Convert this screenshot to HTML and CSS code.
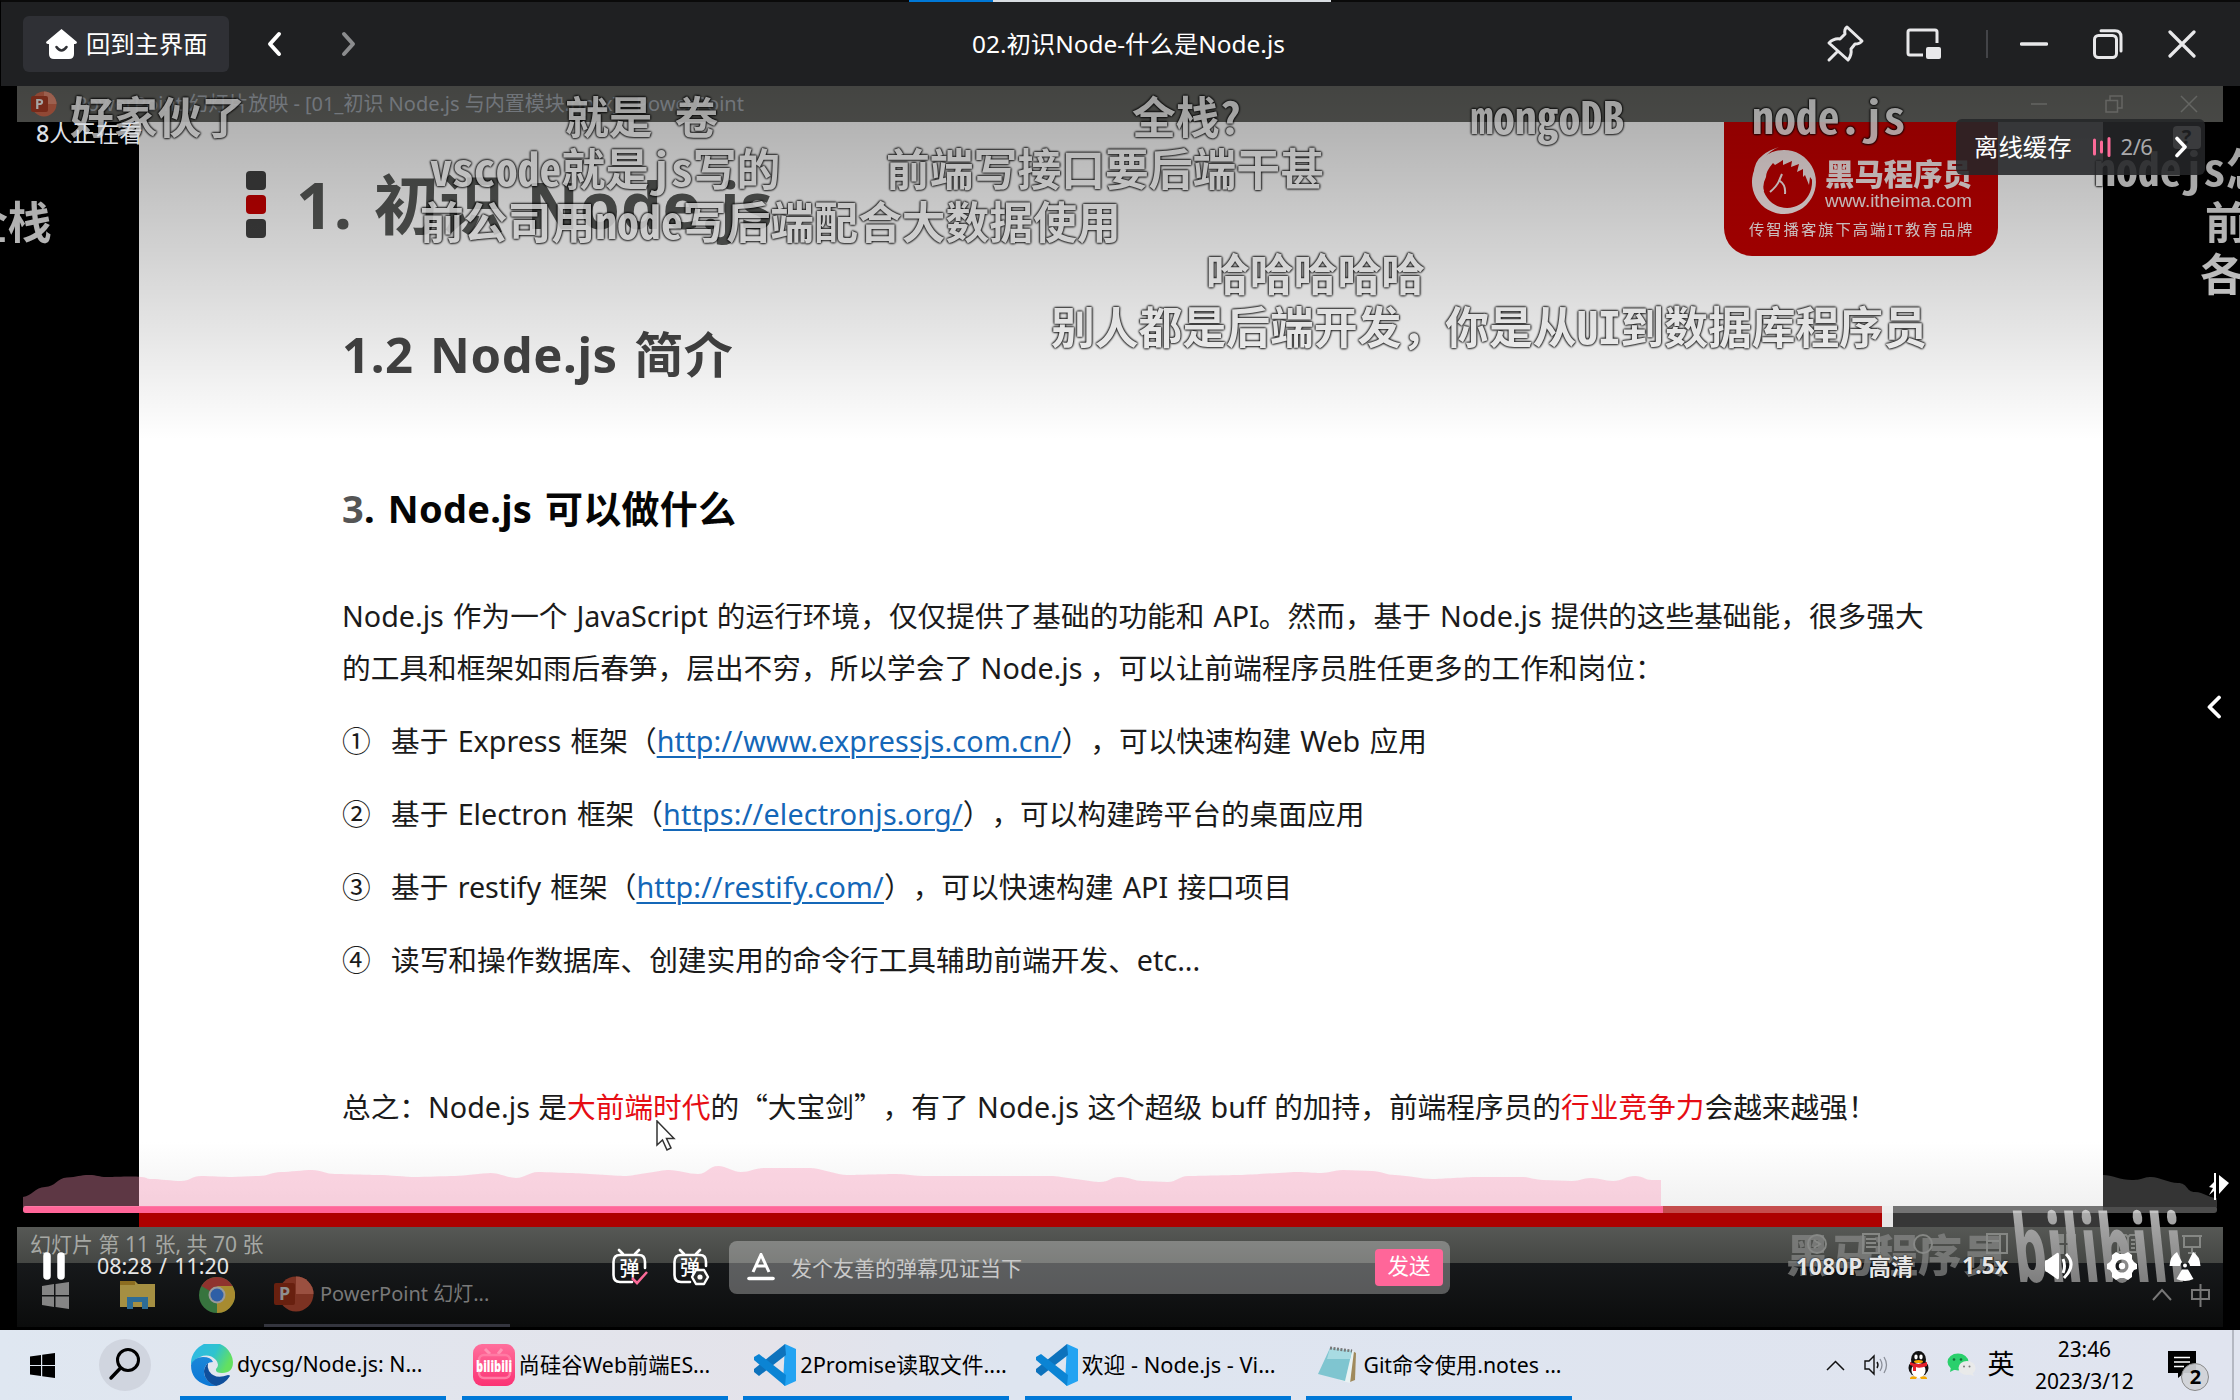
FILE: index.html
```html
<!DOCTYPE html>
<html lang="zh-CN">
<head>
<meta charset="utf-8">
<title>02.初识Node-什么是Node.js</title>
<link rel="stylesheet" href="styles.css">
</head>
<body>
<div class="screen">
  <header class="titlebar">
    <div class="loading-strip"></div>
    <button class="home">
      <svg width="33" height="32" viewBox="0 0 33 32"><path d="M16.500 1 L32 14 Q32 16 30 16 H29 V26 Q29 31 24 31 H9 Q4 31 4 26 V16 H3 Q1 16 1 14 Z" fill="#fff"/><path d="M11.500 19 Q16.500 26 21.500 19" fill="none" stroke="#2f3035" stroke-width="2.600" stroke-linecap="round"/></svg>
      <span>回到主界面</span>
    </button>
    <svg class="nav-back" width="16" height="26" viewBox="0 0 16 26"><path d="M13 3 L4 13 L13 23" fill="none" stroke="#fff" stroke-width="4" stroke-linecap="round" stroke-linejoin="round"/></svg>
    <svg class="nav-next" width="16" height="26" viewBox="0 0 16 26"><path d="M3 3 L12 13 L3 23" fill="none" stroke="#8b8c8e" stroke-width="4" stroke-linecap="round" stroke-linejoin="round"/></svg>
    <h1 class="window-title">02.初识Node-什么是Node.js</h1>
    <div class="window-tools">
      <svg width="38" height="38" viewBox="0 0 38 38"><path d="M21 2 L36 16 Q34 19 29 19 L25 24 Q26 30 22 35 L3 18 Q8 13 14 14 L19 9 Q18 4 21 2 Z M12 26 L3 35" fill="none" stroke="#e8e8ea" stroke-width="3" stroke-linejoin="round" stroke-linecap="round"/></svg>
      <svg width="36" height="32" viewBox="0 0 36 32"><path d="M31 15 V4 Q31 2 29 2 H4 Q2 2 2 4 V25 Q2 27 4 27 H17" fill="none" stroke="#e8e8ea" stroke-width="3"/><rect x="20" y="19" width="15" height="12" rx="2" fill="#e8e8ea"/></svg>
      <i class="divider"></i>
      <svg width="28" height="4" viewBox="0 0 28 4"><path d="M1.500 2 H26.500" stroke="#e8e8ea" stroke-width="3.400" stroke-linecap="round"/></svg>
      <svg width="30" height="31" viewBox="0 0 30 31"><rect x="1.500" y="6.500" width="22" height="22" rx="4" fill="none" stroke="#e8e8ea" stroke-width="3"/><path d="M8 1.800 H22 Q28 1.800 28 8 V22" fill="none" stroke="#e8e8ea" stroke-width="3" stroke-linecap="round"/></svg>
      <svg width="28" height="28" viewBox="0 0 28 28"><path d="M2 2 L26 26 M26 2 L2 26" stroke="#e8e8ea" stroke-width="3.200" stroke-linecap="round"/></svg>
    </div>
  </header>

  <main class="video">
    <div class="ppt-title">
      <svg width="26" height="28" viewBox="0 0 26 28"><circle cx="13" cy="14" r="12.500" fill="#d8694b"/><path d="M13 1.500 A12.500 12.500 0 0 1 25.500 14 H13 Z" fill="#ee9075"/><rect x="0" y="6" width="17" height="16" rx="2" fill="#b23a20"/><text x="4" y="19" class="p-letter">P</text></svg>
      <span>PowerPoint 幻灯片放映 - [01_初识 Node.js 与内置模块.pptx] - PowerPoint</span>
      <div class="ppt-window">
        <svg width="18" height="18"><path d="M1 9 H17" stroke="#92938f" stroke-width="1.500"/></svg>
        <svg width="18" height="18"><path d="M1 5.500 H12.500 V17 H1 Z M5 5 V1 H17 V13 H13" fill="none" stroke="#92938f" stroke-width="1.500"/></svg>
        <svg width="18" height="18"><path d="M1 1 L17 17 M17 1 L1 17" stroke="#92938f" stroke-width="1.500"/></svg>
      </div>
    </div>

    <article class="slide">
      <div class="slide-heading">
        <div class="marks"><i></i><i></i><i></i></div>
        <h2>1. 初识 Node.js</h2>
      </div>
      <h3>1.2 Node.js 简介</h3>
      <h4><span class="dim">3</span>. Node.js 可以做什么</h4>
      <p class="intro"><span class="l1">Node.js 作为一个 JavaScript 的运行环境，仅仅提供了基础的功能和 API。然而，基于 Node.js 提供的这些基础能，很多强大</span><br><span class="l2">的工具和框架如雨后春笋，层出不穷，所以学会了 Node.js ，可以让前端程序员胜任更多的工作和岗位：</span></p>
      <ol>
        <li><b>①</b>基于 Express 框架（<a>http://www.expressjs.com.cn/</a>），可以快速构建 Web 应用</li>
        <li><b>②</b>基于 Electron 框架（<a>https://electronjs.org/</a>），可以构建跨平台的桌面应用</li>
        <li><b>③</b>基于 restify 框架（<a>http://restify.com/</a>），可以快速构建 API 接口项目</li>
        <li><b>④</b>读写和操作数据库、创建实用的命令行工具辅助前端开发、etc...</li>
      </ol>
      <p class="summary">总之：Node.js 是<em>大前端时代</em>的<q>“</q>大宝剑<q>”</q>，有了 Node.js 这个超级 buff 的加持，前端程序员的<em>行业竞争力</em>会越来越强！</p>
      <div class="brand">
        <svg width="70" height="70" viewBox="0 0 70 70"><path fill-rule="evenodd" fill="#fff" d="M35 3 A32 32 0 1 1 34.900 3 Z M38 9 A25 26 0 1 0 38.100 9 Z"/><path d="M10 47 Q-2 20 14 8 Q20 3 30 0 Q20 4 15 12 Q4 26 12 47 Z" fill="#fff"/><path d="M12 46 Q8 26 22 12 Q38 2 56 12 Q66 22 64 34 L61 30 L60 38 L56 28 L54 30 L54 22 L48 25 L50 17 L42 20 L43 14 L34 18 L34 13 L26 18 L24 16 Q17 24 17 30 Q13 38 15 44 Z" fill="#fff"/><path d="M21 45 Q28 39 30 34 L33 27 M31 34 Q37 38 36 47" fill="none" stroke="#fff" stroke-width="2"/></svg>
        <div class="brand-name"><strong>黑马程序员</strong><span>www.itheima.com</span></div>
        <small>传智播客旗下高端IT教育品牌</small>
      </div>
    </article>
    <div class="slide-foot"><i class="red"></i><i class="white"></i><i class="grey"></i></div>

    <div class="ppt-status">
      <span>幻灯片 第 11 张, 共 70 张</span>
      <div class="ppt-views">
        <svg width="220" height="24" viewBox="0 0 220 24" fill="none" stroke="#858784" stroke-width="2"><circle cx="12" cy="12" r="9"/><path d="M9 8 L15 12 L9 16"/><path d="M58 2 H74 V21 H58 Z M61 7 H71 M61 11 H71 M61 15 H71"/><circle cx="118" cy="12" r="9"/><path d="M182 2 H202 V21 H182 Z M182 9 H195 M195 2 V21"/></svg>
        <svg width="154" height="26" viewBox="0 0 154 26" fill="none" stroke="#858784" stroke-width="2"><path d="M3 3 H11 V10 H3 Z M15 3 H23 V10 H15 Z M3 14 H11 V21 H3 Z M15 14 H23 V21 H15 Z" fill="#858784"/><path d="M66 3 H74 L76 5 L78 3 H85 V20 H66 Z M76 5 V20 M69 8 H73 M79 8 H83 M69 12 H73 M79 12 H83 M69 16 H73 M79 16 H83 M130 4 H150 M132 4 V15 H148 V4 M140 15 V20 M136 21 H144"/></svg>
      </div>
    </div>
    <div class="ppt-taskbar">
      <svg class="win" width="27" height="27" viewBox="0 0 27 27"><path d="M0 4 L12 2 V13 H0 Z M13.500 2 L27 0 V13 H13.500 Z M0 14.500 H12 V25 L0 23 Z M13.500 14.500 H27 V27 L13.500 25 Z" fill="#858585"/></svg>
      <svg class="folder" width="36" height="30" viewBox="0 0 36 30"><path d="M0 1 H15 L18 4 H35 V27 H0 Z" fill="#a58f42"/><path d="M0 1 H15 V5 H0Z" fill="#8c6d20"/><path d="M7 29 V17 H28 V29 H22 V22 H13 V29 Z" fill="#2d6c96"/></svg>
      <svg class="chrome" width="36" height="36" viewBox="0 0 36 36"><circle cx="18" cy="18" r="18" fill="#37743e"/><path d="M18 18 L2.400 9 A18 18 0 0 1 33.600 9 Z" fill="#8f332e"/><path d="M18 18 L33.600 9 A18 18 0 0 1 18 36 Z" fill="#a78b30"/><path d="M18 9 H33.600 L26 20 Z" fill="#a78b30"/><circle cx="18" cy="18" r="8.500" fill="#9a9a9a"/><circle cx="18" cy="18" r="6.500" fill="#2f5fa6"/></svg>
      <div class="ppt-app">
        <svg width="40" height="36" viewBox="0 0 40 36"><circle cx="22" cy="18" r="17.500" fill="#7c3222"/><path d="M22 .5 A17.500 17.500 0 0 1 39.500 18 H22 Z" fill="#9a5040"/><rect y="7" width="21" height="22" rx="2" fill="#68200f"/><text x="5" y="24" class="p-small">P</text></svg>
        <span>PowerPoint 幻灯...</span>
      </div>
      <svg class="mini-tray" width="62" height="26" viewBox="0 0 62 26" fill="none" stroke="#777" stroke-width="2"><path d="M2 18 L11 8 L20 18 M41 8 H58 V17 H41 Z M49.500 2 V25"/></svg>
    </div>

    <div class="wm-heima">黑马程序员</div>
    <div class="wm-bili">bilibili</div>
    <svg class="cursor" width="20" height="32" viewBox="0 0 20 32"><path d="M1 1 V25 L6.500 20 L11 30 L15 28 L10.500 18.500 H18 Z" fill="#fff" stroke="#333" stroke-width="1.500"/></svg>

    <div class="danmaku">
      <span class="d1">好家伙了</span><span class="d2">就是 卷</span><span class="d3">全栈?</span><span class="d4">mongoDB</span><span class="d5">node.js</span>
      <span class="d6">vscode就是js写的</span><span class="d7">前端写接口要后端干甚</span><span class="d8">nodejs怎么</span>
      <span class="d9">全栈</span><span class="d10">前公司用node写后端配合大数据使用</span><span class="d11">前端</span>
      <span class="d12">哈哈哈哈哈</span><span class="d13">各位</span>
      <span class="d14">别人都是后端开发<u>，</u>你是从UI到数据库程序员</span>
    </div>
    <div class="shade"></div>
    <div class="viewers"><b>8</b>人正在看</div>

    <div class="cache">
      <span>离线缓存</span>
      <svg width="18" height="20" viewBox="0 0 18 20"><path d="M1.500 3 V17 M8.500 5 V15 M16 1.500 V18.500" stroke="#fb6a98" stroke-width="3" stroke-linecap="round"/></svg>
      <em>2/6</em>
      <div class="help">?</div>
      <svg class="go" width="14" height="22" viewBox="0 0 14 22"><path d="M3 2.500 L11 11 L3 19.500" fill="none" stroke="#fff" stroke-width="3.600" stroke-linecap="round" stroke-linejoin="round"/></svg>
    </div>
    <svg class="expand" width="16" height="24" viewBox="0 0 16 24"><path d="M13 2.500 L3.500 12 L13 21.500" fill="none" stroke="#fff" stroke-width="3.800" stroke-linecap="round" stroke-linejoin="round"/></svg>

    <section class="player">
      <svg class="heat" width="2238" height="50" viewBox="0 1160 2238 50">
        <path fill="rgb(251,150,185)" fill-opacity=".37" d="M23 1207 V1197 C32 1196 35 1187 45 1187 S57 1178 67 1177.500 S80 1175 89 1175 S98 1177 107 1177 S132 1176 141 1177 S145 1179 152 1179 S172 1181 181 1181 S192 1176 201 1176 S223 1177 232 1177 S250 1176 259 1176 S272 1172 281 1172 S303 1170 312 1170 S326 1174 335 1174 S370 1175 379 1175 S406 1177 415 1177 S446 1176 455 1176 S482 1173 491 1173 S507 1178 516 1178 S529 1172 538 1172 S562 1173 571 1173 S616 1176 625 1176 S660 1170 669 1170 S689 1174 698 1174 S709 1166 718 1166 S732 1172 741 1172 S755 1168 764 1168 S801 1168 810 1168 S838 1175 847 1175 S887 1174 896 1174 S915 1176 924 1176 S1042 1176 1051 1176 S1091 1182 1100 1182 S1111 1177 1120 1177 S1134 1181 1143 1181 S1159 1182 1168 1182 S1179 1176 1188 1176 S1231 1175 1240 1175 S1289 1172 1298 1172 S1312 1173 1321 1173 S1334 1170 1343 1170 S1363 1171 1372 1171 S1386 1175 1395 1175 S1423 1179 1432 1179 S1467 1177 1476 1177 S1512 1177 1521 1177 S1534 1180 1543 1180 S1563 1181 1572 1181 S1582 1178 1591 1178 S1604 1181 1613 1181 S1626 1176 1635 1176 S1644 1180 1652 1180 L1661 1180 V1207 Z"/>
        <path fill="#343434" d="M2103 1207 V1175 C2112 1175 2120 1180 2132 1180 S2142 1177 2151 1177 S2168 1183 2178 1183 S2186 1192 2195 1192 S2208 1198 2217 1198 V1207 Z"/>
      </svg>
      <div class="progress"><i></i></div>
      <svg class="dock" width="22" height="30" viewBox="0 0 22 30"><path d="M7 1 V28" stroke="#fff" stroke-width="2"/><path d="M11 3 L21 11 L11 22 Z M6 10 L1 15 L5 16 L1 23 L6 19 Z" fill="#fff"/></svg>
      <div class="controls">
        <svg class="pause" width="22" height="28" viewBox="0 0 22 28"><path d="M4 4 V24 M18 4 V24" stroke="#fff" stroke-width="7.500" stroke-linecap="round"/></svg>
        <span class="time">08:28 / 11:20</span>
        <svg class="dm-on" width="38" height="38" viewBox="0 0 38 38"><path d="M21 34 H9 Q2.500 34 2.500 27 V14 Q2.500 7 9 7 H28 Q34 7 34 14 V20 M12 6 L8 2 M24 6 L28 2" fill="none" stroke="#fff" stroke-width="2.600" stroke-linecap="round"/><text x="8.500" y="28" class="dan">弹</text><path d="M21 30 L26 35 L36 24" fill="none" stroke="#fb6a98" stroke-width="2.600"/></svg>
        <svg class="dm-set" width="38" height="38" viewBox="0 0 38 38"><path d="M18 34 H9 Q2.500 34 2.500 27 V14 Q2.500 7 9 7 H28 Q34 7 34 14 V18 M12 6 L8 2 M24 6 L28 2" fill="none" stroke="#fff" stroke-width="2.600" stroke-linecap="round"/><text x="8" y="27" class="dan">弹</text><path d="M24 22 H32 L36 29 L32 36 H24 L20 29 Z" fill="#2a2c2c" stroke="#fff" stroke-width="2.400" stroke-linejoin="round"/><circle cx="28" cy="29" r="2.600" fill="#fff"/></svg>
        <div class="composer">
          <svg width="28" height="28" viewBox="0 0 28 28"><path d="M6 19 L14 1.500 L22 19 M9 13 H19" fill="none" stroke="#fff" stroke-width="3"/><path d="M2 25.500 H26" stroke="#fff" stroke-width="3.600" stroke-linecap="round"/></svg>
          <span>发个友善的弹幕见证当下</span>
          <button>发送</button>
        </div>
        <b class="quality">1080P 高清</b>
        <b class="speed">1.5x</b>
        <svg class="vol" width="30" height="30" viewBox="0 0 30 30"><path d="M1 10 Q1 9 3 9 L13 2 Q15 1 15 4 V26 Q15 29 13 28 L3 21 Q1 21 1 19 Z" fill="#fff"/><path d="M19 8 Q22 15 19 22 M22 3 Q33 14 20 27" fill="none" stroke="#fff" stroke-width="3"/></svg>
        <svg class="gear" width="32" height="32" viewBox="0 0 32 32"><path fill-rule="evenodd" fill="#fff" d="M10 2 L14 4 H18 L22 2 L26 5 L26 9 L28 12 L31 14 V19 L28 20 L26 23 V27 L22 30 L18 28 H14 L10 30 L6 27 V23 L4 20 L1 19 V14 L4 12 L6 9 V5 Z M16 9.500 A6.500 6.500 0 1 0 16.010 9.500 Z"/><circle cx="16" cy="16" r="3.200" fill="#fff"/></svg>
        <svg class="rad" width="32" height="32" viewBox="0 0 32 32"><path d="M8 2 L13 12 Q11 14 11 16 H.5 Q1 6 8 2 Z M24 2 L19 12 Q21 14 21 16 H31.500 Q31 6 24 2 Z M13 19.500 H19 L24.500 29 Q16 33 7.500 29 Z" fill="#fff"/><circle cx="16" cy="15.500" r="2" fill="#fff"/></svg>
      </div>
    </section>
  </main>

  <footer class="taskbar">
    <svg class="start" width="25" height="25" viewBox="0 0 25 25"><path d="M0 3.500 L11 2 V12 H0 Z M12.200 1.800 L25 0 V12 H12.200 Z M0 13 H11 V23 L0 21.500 Z M12.200 13 H25 V25 L12.200 23.200 Z" fill="#000"/></svg>
    <div class="search"><svg width="36" height="36" viewBox="0 0 36 36"><circle cx="21" cy="13" r="10.500" fill="none" stroke="#000" stroke-width="3"/><path d="M13.500 21 L4 31" stroke="#000" stroke-width="3.400" stroke-linecap="round"/></svg></div>
    <nav class="tasks">
      <div class="task t1"><svg width="42" height="42" viewBox="0 0 42 42"><defs><linearGradient id="eg" x1="0" y1="0" x2="1" y2=".4"><stop offset="0" stop-color="#2fb6e8"/><stop offset=".6" stop-color="#2fc3cf"/><stop offset="1" stop-color="#63e060"/></linearGradient><linearGradient id="eb" x1="0" y1="0" x2="0" y2="1"><stop offset="0" stop-color="#1a86d8"/><stop offset="1" stop-color="#0c78d6"/></linearGradient></defs><path d="M0 21 A21 21 0 0 1 42 18 Q42 29 31 29 Q24 29 25 25 Q29 21 25 16 Q18 9 9 13 Q3 15 0 21 Z" fill="url(#eg)"/><path d="M0 21 Q3 13 12 13 Q20 13 22 18 Q14 18 13 27 Q13 37 25 42 Q20 43 15 41 Q0 36 0 21 Z" fill="url(#eb)"/><path d="M17 19 Q13 23 13 28 Q14 38 25 42 Q34 40 39 32 Q39 31 37 31 Q24 36 18 27 Q16 23 17 19 Z" fill="#0f4f9c"/></svg><span>dycsg/Node.js: N...</span></div>
      <div class="task t2"><svg width="42" height="42" viewBox="0 0 42 42"><defs><linearGradient id="bl" x1="0" y1="0" x2="0" y2="1"><stop offset="0" stop-color="#ff6f9c"/><stop offset="1" stop-color="#fb3274"/></linearGradient></defs><rect width="42" height="42" rx="9" fill="url(#bl)"/><path d="M12 5 L17 10 M29 5 L25 10" stroke="#ff92b4" stroke-width="3"/><rect x="6" y="11" width="31" height="23" rx="5" fill="none" stroke="#ff7ba4" stroke-width="2.500"/><text x="3" y="28" class="bili-mini" textLength="36" lengthAdjust="spacingAndGlyphs">bilibili</text></svg><span>尚硅谷Web前端ES...</span></div>
      <div class="task"><svg width="42" height="42" viewBox="0 0 42 42"><path d="M31 0 L42 5 V37 L31 42 L29 40 Z" fill="#23a3f2"/><path d="M31 0 L32 11 L5 32 L0 28 V25 Z" fill="#0d72bc"/><path d="M31 42 L32 31 L5 10 L0 13 V16 Z" fill="#0b84d4"/></svg><span>2Promise读取文件....</span></div>
      <div class="task"><svg width="42" height="42" viewBox="0 0 42 42"><path d="M31 0 L42 5 V37 L31 42 L29 40 Z" fill="#23a3f2"/><path d="M31 0 L32 11 L5 32 L0 28 V25 Z" fill="#0d72bc"/><path d="M31 42 L32 31 L5 10 L0 13 V16 Z" fill="#0b84d4"/></svg><span>欢迎 - Node.js - Vi...</span></div>
      <div class="task t5"><svg width="42" height="42" viewBox="0 0 42 42"><path d="M34 6 L39 9 L38 36 L33 38 Z" fill="#a08a5c"/><path d="M14 4 L37 7 L33 39 L22 36 Z" fill="#e9f2f3"/><path d="M13 4 L35 7 L28 37 L1 30 Z" fill="#7fc5d0"/><path d="M13 4 L35 7 L33 15 L10 15 Z" fill="#a8dbe2"/><path d="M13 4 L35 7" stroke="#777" stroke-width="3" stroke-dasharray="2 1.500"/></svg><span>Git命令使用.notes ...</span></div>
    </nav>
    <div class="tray">
      <svg class="up" width="19" height="11" viewBox="0 0 19 11"><path d="M1 10 L9.500 1.500 L18 10" fill="none" stroke="#111" stroke-width="1.500"/></svg>
      <svg class="snd" width="28" height="22" viewBox="0 0 28 22"><path d="M1 7 H5 L10 2 V20 L5 15 H1 Z M13 8 Q15 11 13 14" fill="none" stroke="#111" stroke-width="1.400"/><path d="M16 5 Q20 11 16 17 M20 3 Q25 11 20 19" fill="none" stroke="#8a8e98" stroke-width="1.300"/></svg>
      <svg class="qq" width="23" height="28" viewBox="0 0 23 28"><ellipse cx="11.500" cy="17" rx="10" ry="9" fill="#111"/><ellipse cx="11.500" cy="8.500" rx="7.500" ry="8.500" fill="#111"/><ellipse cx="11.500" cy="19.500" rx="7" ry="7.500" fill="#fff"/><path d="M3 11 Q11 15 20 11 L20 15 Q12 18 9 16 V20 H6 V15 L3 14 Z" fill="#e5202b"/><ellipse cx="9" cy="6" rx="1.700" ry="2.400" fill="#fff"/><ellipse cx="14" cy="6" rx="1.700" ry="2.400" fill="#fff"/><ellipse cx="11.500" cy="10.500" rx="4.500" ry="1.600" fill="#f5a800"/><path d="M3 27 Q4 24 10 26 L9 28 H3 Z M20 27 Q19 24 13 26 L14 28 H20 Z" fill="#f5a800"/></svg>
      <svg class="wx" width="29" height="24" viewBox="0 0 29 24"><ellipse cx="11" cy="9" rx="10.500" ry="8.500" fill="#2ad06c"/><path d="M4 14 L3 19 L9 16 Z" fill="#2ad06c"/><ellipse cx="20" cy="15" rx="8.500" ry="7" fill="#e9eaea"/><path d="M25 19 L27 23 L21 21 Z" fill="#e9eaea"/><g fill="#146a38"><circle cx="7" cy="6.500" r="1.300"/><circle cx="14" cy="6.500" r="1.300"/></g><g fill="#777"><circle cx="17" cy="13.500" r="1"/><circle cx="22.500" cy="13.500" r="1"/></g></svg>
      <span class="ime">英</span>
      <div class="clock"><span>23:46</span><span>2023/3/12</span></div>
      <div class="note"><svg width="28" height="28" viewBox="0 0 28 28"><path d="M0 0 H28 V22 H16 L10 27 V22 H0 Z" fill="#000"/><path d="M6 6.500 H22 M6 11 H22 M6 15.500 H16" stroke="#fff" stroke-width="1.600"/></svg><b>2</b></div>
      <i class="edge"></i>
    </div>
  </footer>
</div>
</body>
</html>
```
FILE: styles.css
```css
* { box-sizing: border-box; margin: 0; padding: 0; }
body { width: 2240px; height: 1400px; overflow: hidden; background: #000; font-family: "Noto Sans", "Noto Sans CJK SC", sans-serif; text-spacing-trim: space-all; }
svg { display: block; flex: none; }
i, em { font-style: normal; }
button { border: 0; font: inherit; color: inherit; }
.screen { width: 2240px; height: 1400px; display: flex; flex-direction: column; overflow: hidden; }

/* player window title bar */
.titlebar { position: relative; height: 86px; flex: none; display: flex; align-items: center; padding-left: 23px; background: #1f2022; border-top: 2px solid #0a0a0a; border-left: 1px solid #000; color: #fff; }
.loading-strip { position: absolute; left: 908px; top: -2px; width: 422px; height: 2px; background: linear-gradient(90deg, #0078d7 84px, #d9dde2 84px); }
.home { width: 206px; height: 56px; border-radius: 6px; background: #2f3035; display: flex; align-items: center; gap: 8px; padding-left: 22px; font-size: 24.300px; white-space: nowrap; margin-left: -1px; }
.home span { padding-bottom: 3px; }
.nav-back { margin-left: 37px; }
.nav-next { margin-left: 59px; }
.window-title { margin-left: 615px; width: 320px; padding-bottom: 3px; font-weight: 400; font-size: 24.400px; white-space: nowrap; }
.window-tools { margin-left: 534px; display: flex; align-items: center; }
.window-tools > :nth-child(2) { margin-left: 42px; }
.divider { width: 2px; height: 28px; background: #434448; margin-left: 44px; }
.window-tools > :nth-child(4) { margin-left: 32px; }
.window-tools > :nth-child(5) { margin-left: 45px; }
.window-tools > :nth-child(6) { margin-left: 45px; }

/* recorded presentation */
.video { position: relative; height: 1244px; flex: none; background: #000; overflow: hidden; }
.ppt-title { height: 36px; margin: 0 17px; padding-left: 14px; background: #656662; display: flex; align-items: center; color: #a4aab2; font-size: 20px; white-space: nowrap; }
.ppt-title > span { margin-left: 18px; padding-bottom: 4px; }
.ppt-window { margin-left: auto; margin-right: 25px; display: flex; gap: 57px; }
.p-letter { font: 700 14px "Noto Sans", sans-serif; fill: #fff; }
.p-small { font: 700 18px "Noto Sans", sans-serif; fill: #8f8f8f; }
.slide { position: relative; width: 1964px; height: 1084px; margin-left: 139px; padding: 37px 0 0 203px; background: linear-gradient(#fff 1020px, #f1f1f1); color: #1b1b1b; font-size: 28.700px; white-space: nowrap; }
.slide-heading { display: flex; align-items: center; margin-left: -96px; height: 90px; }
.marks { display: flex; flex-direction: column; gap: 5px; width: 50px; margin-top: 1px; }
.marks i { width: 20px; height: 19px; border-radius: 4px; background: #404040; }
.marks i:nth-child(2) { background: #c80000; }
.slide h2 { font-size: 65px; line-height: 88px; color: #565856; letter-spacing: .5px; word-spacing: 4px; }
.slide h3 { margin-top: 70px; font-size: 49px; line-height: 70px; color: #444; letter-spacing: .6px; word-spacing: 3px; }
.slide h4 { margin-top: 89px; font-size: 38px; line-height: 60px; color: #050505; letter-spacing: .3px; word-spacing: 2.500px; }
.dim { color: #555; }
.intro { margin-top: 52px; line-height: 52px; }
.l1 { word-spacing: 1.500px; }
.slide ol { list-style: none; margin-top: 10px; }
.slide li { line-height: 73px; word-spacing: 1.800px; }
.slide li b { display: inline-block; width: 49px; font-weight: 400; font-family: "Noto Sans CJK SC", sans-serif; line-height: 40px; }
.slide a { color: #1467b8; letter-spacing: .2px; text-decoration: underline; text-decoration-thickness: 2px; text-underline-offset: 4px; }
.slide q { quotes: none; font-family: "Noto Sans CJK SC", sans-serif; }
.summary { margin-top: 84px; line-height: 52px; word-spacing: 1px; }
.summary em { color: #e60d14; }
.brand { position: absolute; left: 1585px; top: 0; width: 274px; height: 134px; border-radius: 0 0 28px 28px; background: linear-gradient(#cd0000, #be0000); color: #fff; display: flex; flex-wrap: wrap; align-content: flex-start; padding: 25px 0 0 25px; gap: 0 6px; }
.brand > *, .ppt-title > svg { opacity: .92; }
.brand-name { display: flex; flex-direction: column; padding-top: 9px; }
.brand-name strong { font-size: 29.400px; line-height: 36px; font-weight: 900; }
.brand-name span { font: 18.900px/18px "Liberation Sans", sans-serif; }
.brand small { font-size: 15.300px; line-height: 24px; letter-spacing: 2px; width: 240px; }
.slide-foot { height: 21px; width: 1964px; margin-left: 139px; display: flex; }
.red { width: 1743px; background: #ad0000; }
.white { width: 11px; background: #e6e6e6; }
.grey { flex: 1; background: #373737; }
.ppt-status { height: 36px; margin: 0 17px; padding: 0 17px 0 13px; display: flex; align-items: center; justify-content: space-between; background: linear-gradient(#565855, #444643); color: #a6a8a4; font-size: 21px; }
.ppt-status span { padding-bottom: 4px; }
.ppt-views { display: flex; gap: 27px; }
.ppt-taskbar { height: 64px; margin: 0 17px; padding-left: 25px; display: flex; align-items: center; background: linear-gradient(#17191b, #0b0c0c); }
.folder { margin-left: 51px; }
.chrome { margin-left: 43px; }
.ppt-app { margin-left: 29px; padding-left: 10px; height: 64px; width: 246px; border-bottom: 3px solid #34353e; display: flex; align-items: center; gap: 6px; font-size: 20px; color: #797979; white-space: nowrap; }
.ppt-app span { padding-bottom: 2px; }
.mini-tray { margin-left: auto; margin-right: 10px; }
.wm-heima { position: absolute; left: 1786px; top: 1135px; font: 900 44px/64px "Noto Sans CJK SC", sans-serif; color: #898a89; opacity: .7; white-space: nowrap; }
.wm-bili { position: absolute; left: 2013px; top: 1113px; font: 800 94px/94px "Noto Sans", sans-serif; letter-spacing: 2px; color: transparent; background: linear-gradient(#b4b4b4, #777); background-clip: text; transform: scaleX(.55) skewX(11deg); transform-origin: 0 50%; }
.cursor { position: absolute; left: 656px; top: 1034px; }

/* flying comments */
.danmaku span { position: absolute; font: 700 43.800px/52px "Noto Sans CJK SC", sans-serif; font-feature-settings: "hwid"; color: #fff; opacity: .87; white-space: pre; text-shadow: 1px 0 2px rgba(0,0,0,.8), -1px 0 2px rgba(0,0,0,.8), 0 1px 2px rgba(0,0,0,.8), 0 -1px 2px rgba(0,0,0,.8); }
.danmaku u { text-decoration: none; font-feature-settings: normal; }
.danmaku .d1 { left: 70px; top: 3px; }
.danmaku .d2 { left: 565px; top: 3px; }
.danmaku .d3 { left: 1132px; top: 3px; }
.danmaku .d4 { left: 1471px; top: 3px; }
.danmaku .d5 { left: 1752px; top: 3px; }
.danmaku .d6 { left: 430px; top: 55px; }
.danmaku .d7 { left: 886px; top: 55px; }
.danmaku .d8 { left: 2094px; top: 55px; }
.danmaku .d9 { left: -36px; top: 108px; }
.danmaku .d10 { left: 420px; top: 108px; }
.danmaku .d11 { left: 2205px; top: 108px; }
.danmaku .d12 { left: 1206px; top: 160px; }
.danmaku .d13 { left: 2200px; top: 160px; }
.danmaku .d14 { left: 1051px; top: 213px; }
.shade { position: absolute; inset: 0 0 auto 0; height: 354px; background: linear-gradient(rgba(0,0,0,.33), rgba(0,0,0,0)); }
.viewers { position: absolute; left: 36px; top: 32px; font-size: 23.300px; line-height: 30px; color: #dcdfe3; }
.viewers b { font-weight: 500; }
.cache { position: absolute; left: 1956px; top: 33px; width: 249px; height: 56px; border-radius: 6px; background: rgba(36,37,40,.88); display: flex; align-items: center; padding-left: 18px; color: #fff; font-size: 24.400px; white-space: nowrap; }
.cache span { padding-bottom: 3px; }
.cache > svg { margin-left: 21px; }
.cache em { margin-left: 10px; width: 33px; color: #a9a9ab; font-size: 22px; letter-spacing: -.5px; padding-bottom: 2px; }
.cache .help { width: 28px; height: 23px; margin: -20px 0 0 19px; border-radius: 4px; background: #3a3b3d; color: #1d1e20; font-size: 20px; line-height: 22px; font-weight: 700; text-align: center; }
.cache .go { margin-left: -27px; }
.expand { position: absolute; right: 18px; top: 609px; }

/* player controls */
.player { position: absolute; left: 0; right: 0; bottom: 0; height: 170px; }
.heat { margin-bottom: -4px; }
.progress { margin: 0 23px; height: 7px; width: 2194px; border-radius: 3px; background: rgba(255,255,255,.3); }
.progress i { display: block; height: 7px; width: 1640px; background: #ff6699; border-radius: 3px 0 0 3px; }
.dock { position: absolute; left: 2208px; top: 12px; }
.controls { display: flex; align-items: center; height: 54px; margin-top: 27px; padding-left: 43px; color: #e6e6e6; white-space: nowrap; }
.controls > svg { margin-bottom: 2px; }
.time { margin-left: 32px; width: 138px; font-size: 21.500px; word-spacing: 1.500px; padding-bottom: 4px; }
.controls .dm-on { margin: 0 0 0 376px; }
.controls .dm-set { margin: 0 0 0 23px; }
.dan { font: 500 20px "Noto Sans CJK SC", sans-serif; fill: #fff; }
.composer { margin-left: 19px; width: 721px; height: 53px; border-radius: 8px; background: rgba(255,255,255,.3); display: flex; align-items: center; padding: 0 7px 0 18px; font-size: 21px; color: #c9c9c9; }
.composer span { margin-left: 16px; }
.composer button { margin-left: auto; width: 68px; height: 37px; border-radius: 4px; background: #ff6699; color: #fff; font-size: 21.500px; line-height: 34px; padding-bottom: 2px; }
.quality { margin-left: 346px; width: 130px; font-size: 22.500px; letter-spacing: .2px; text-shadow: 0 0 2px #000; padding-bottom: 3px; }
.speed { margin-left: 36px; width: 48px; font-size: 23px; text-shadow: 0 0 2px #000; padding-bottom: 4px; }
.vol { margin-left: 34px; }
.gear { margin-left: 32px; }
.rad { margin-left: 31px; }

/* desktop taskbar */
.taskbar { height: 70px; flex: none; display: flex; align-items: center; background: linear-gradient(90deg, #dfe7f1, #e4e3ea 35%, #dee5f0 45%, #e0e4ef); padding-left: 30px; color: #000; white-space: nowrap; }
.search { width: 52px; height: 52px; border-radius: 50%; margin-left: 44px; background: #d0d5df; display: flex; align-items: center; justify-content: center; }
.tasks { display: flex; gap: 15.600px; margin-left: 29px; align-self: stretch; }
.task { width: 266px; border-bottom: 4px solid #0078d7; padding: 3px 0 0 11px; display: flex; align-items: center; gap: 4px; font-size: 21.800px; }
.task span { padding-bottom: 2px; }
.t1, .t2, .t5 { font-size: 21.300px; }
.bili-mini { font: 900 16px "Noto Sans", sans-serif; fill: #fff; }
.tray { margin-left: 254px; display: flex; align-items: center; align-self: stretch; }
.snd { margin-left: 19px; }
.qq { margin-left: 15px; }
.wx { margin-left: 17px; }
.ime { margin-left: 11px; font-size: 27px; line-height: 60px; padding-bottom: 2px; }
.clock { margin-left: 14px; width: 112px; display: flex; flex-direction: column; text-align: center; font-size: 21px; line-height: 32px; letter-spacing: -.1px; }
.note { position: relative; margin-left: 28px; }
.note b { position: absolute; left: 13px; top: 12px; width: 28px; height: 28px; border: 1px solid #888; border-radius: 50%; background: rgba(208,210,215,.92); font-size: 20px; line-height: 26px; text-align: center; }
.edge { width: 2px; height: 70px; background: #b4b8c2; margin-left: 36px; }
```
